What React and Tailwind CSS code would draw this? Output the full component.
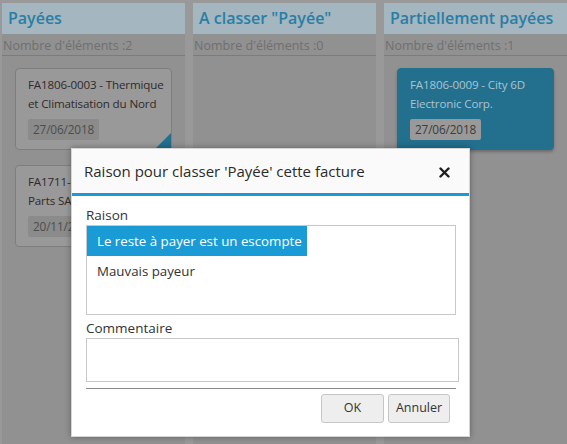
import React from "react";

const columns = [
  {
    titre: "Payées",
    count: 2,
    cards: [
      { ref: "FA1806-0003 - Thermique et Climatisation du Nord", date: "27/06/2018", flag: true },
      { ref: "FA1711-0007 - Mécanique Parts SA", date: "20/11/2017" },
    ],
  },
  { titre: 'A classer "Payée"', count: 0, cards: [] },
  {
    titre: "Partiellement payées",
    count: 1,
    cards: [{ ref: "FA1806-0009 - City 6D Electronic Corp.", date: "27/06/2018", active: true }],
  },
];

const Card = ({ card }) => (
  <div
    className={
      "relative mx-[13px] mb-[15px] rounded-[4px] border pt-[6px] pr-[2px] pb-[9px] pl-[12px] text-[11.6px] leading-[19px] tracking-[-0.15px] " +
      (card.active
        ? "border-[#236f8e] bg-[#236f8e] text-[#a9c5d1] shadow-[0_2px_3px_rgba(0,0,0,0.25)]"
        : "border-[#7e7e7e] bg-[#999999] text-[#2f2a2a]")
    }
  >
    <div>{card.ref}</div>
    <div
      className={
        "mt-[6px] inline-block rounded-[2px] px-[5px] py-[1px] text-[11.8px] leading-[19px] " +
        (card.active ? "bg-[#999999] text-[#3c3c3c]" : "bg-[#8b8b8b] text-[#4d4d4d]")
      }
    >
      {card.date}
    </div>
    {card.flag && (
      <div className="absolute right-0 bottom-0 h-0 w-0 border-b-[16px] border-l-[16px] border-b-[#236f8e] border-l-transparent" />
    )}
  </div>
);

export default function App() {
  return (
    <div
      className="relative h-[444px] w-[567px] overflow-hidden bg-[#999999]"
      style={{ fontFamily: '"Open Sans", "Noto Sans", sans-serif' }}
    >
      {/* Colonnes */}
      <div className="flex h-full gap-[8px] pt-[3px] pl-[2px]">
        {columns.map((col) => (
          <div key={col.titre} className="flex w-[183px] flex-col bg-[#919191]">
            <div className="h-[31px] bg-[#a4b6bf] pl-[6px] text-[16px] leading-[31px] font-semibold text-[#2a7ea5]">
              {col.titre}
            </div>
            <div className="border-b border-[#7c7c7c] pt-[4px] pb-[2px] pl-[1px] text-[12.5px] leading-[15px] text-[#6f6f6f]">
              Nombre d'éléments :{col.count}
            </div>
            <div className="pt-[12px]">
              {col.cards.map((c) => (
                <Card key={c.ref} card={c} />
              ))}
            </div>
          </div>
        ))}
      </div>

      {/* Dialogue */}
      <div className="absolute top-[148px] left-[71px] w-[399px] border border-[#d6d6d6] bg-white shadow-[0_0_6px_rgba(0,0,0,0.35)]">
        <div className="flex h-[47px] items-center justify-between border-b-[3px] border-[#1a9bd6] bg-[#fafafa] pr-[19px] pl-[12px]">
          <span className="text-[15px] text-[#2b2b2b]">Raison pour classer 'Payée' cette facture</span>
          <svg width="11" height="11" viewBox="0 0 11 11" className="mt-[2px]">
            <path d="M1.5 1.5 L9.5 9.5 M9.5 1.5 L1.5 9.5" stroke="#1d1d1d" strokeWidth="2.4" strokeLinecap="round" />
          </svg>
        </div>
        <div className="px-[14px] pt-[10px] pb-[13px]">
          <div className="text-[13.5px] leading-[18px] text-[#333]">Raison</div>
          <div className="mt-[1px] h-[90px] w-[370px] border border-[#c8c8c8] bg-white text-[13.3px]">
            <div className="inline-block h-[30px] bg-[#1a9bd6] pr-[5px] pl-[10px] leading-[30px] text-white">
              Le reste à payer est un escompte
            </div>
            <div className="px-[10px] leading-[30px] text-[#333]">Mauvais payeur</div>
          </div>
          <div className="mt-[4px] text-[13.5px] leading-[18px] text-[#333]">Commentaire</div>
          <div className="mt-[1px] h-[44px] w-[373px] border border-[#c8c8c8]" />
          <div className="mt-[6px] w-[370px] border-t border-[#8a8a8a]" />
          <div className="mt-[5px] flex justify-end gap-[4px] pr-[5px]">
            <button className="h-[29px] w-[63px] rounded-[3px] border border-[#c6c6c6] bg-[#eeeeee] text-[12.5px] text-[#333]">
              OK
            </button>
            <button className="h-[29px] w-[62px] rounded-[3px] border border-[#c6c6c6] bg-[#eeeeee] text-[12.5px] text-[#333]">
              Annuler
            </button>
          </div>
        </div>
      </div>
    </div>
  );
}
